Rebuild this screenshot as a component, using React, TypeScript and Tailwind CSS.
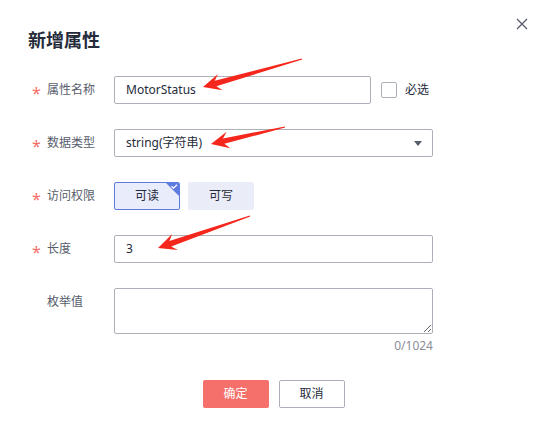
import React from "react";

function arrowPoints(tx: number, ty: number, px: number, py: number) {
  const dx = px - tx;
  const dy = py - ty;
  const L = Math.hypot(dx, dy);
  const ux = dx / L;
  const uy = dy / L;
  const nx = -uy;
  const ny = ux;
  const h = 17;
  const w = 8.5;
  const s = 2.8;
  const t = 0.6;
  const bx = px - ux * (h + 1);
  const by = py - uy * (h + 1);
  const kx = px - ux * (h - 4);
  const ky = py - uy * (h - 4);
  const pts: [number, number][] = [
    [tx + nx * t, ty + ny * t],
    [kx + nx * s, ky + ny * s],
    [bx + nx * w, by + ny * w],
    [px, py],
    [bx - nx * w, by - ny * w],
    [kx - nx * s, ky - ny * s],
    [tx - nx * t, ty - ny * t],
  ];
  return pts.map((p) => `${p[0].toFixed(1)},${p[1].toFixed(1)}`).join(" ");
}

function Label({ text, required = true }: { text: string; required?: boolean }) {
  return (
    <div className="w-[114px] shrink-0 pl-[32px] flex items-center h-[28px] text-[12px] text-[#575d6c]">
      <span className="w-[15px] inline-block text-[16px] leading-[14px] text-[#f66f6a] translate-y-[3px]">
        {required ? "*" : ""}
      </span>
      <span>{text}</span>
    </div>
  );
}

export default function App() {
  return (
    <div className="relative w-[547px] h-[439px] bg-white overflow-hidden font-['Noto_Sans','Noto_Sans_CJK_SC',sans-serif] text-[#252b3a]">
      <button className="absolute top-[18px] left-[516px] w-[12px] h-[12px]" aria-label="close">
        <svg width="12" height="12" viewBox="0 0 12 12">
          <path d="M1 1 L11 11 M11 1 L1 11" stroke="#575d6c" strokeWidth="1.3" fill="none" />
        </svg>
      </button>

      <h2 className="pt-[28px] pl-[28px] text-[18px] leading-[24px] font-bold text-[#252b3a]">新增属性</h2>

      <div className="mt-[24px] flex flex-col gap-[25px]">
        <div className="flex items-center h-[28px]">
          <Label text="属性名称" />
          <div className="w-[257px] h-[28px] border border-[#adb0b8] rounded-[2px] px-[11px] flex items-center text-[12px] text-[#252b3a]">
            MotorStatus
          </div>
          <div className="ml-[10px] w-[16px] h-[16px] border border-[#adb0b8] rounded-[2px] bg-white" />
          <span className="ml-[8px] text-[12px] text-[#252b3a]">必选</span>
        </div>

        <div className="flex items-center h-[28px]">
          <Label text="数据类型" />
          <div className="w-[319px] h-[28px] border border-[#adb0b8] rounded-[2px] pl-[11px] pr-[10px] flex items-center justify-between text-[12px] text-[#252b3a]">
            <span>string(字符串)</span>
            <svg width="8" height="5" viewBox="0 0 8 5">
              <path d="M0 0 H8 L4 5 Z" fill="#575d6c" />
            </svg>
          </div>
        </div>

        <div className="flex items-center h-[28px]">
          <Label text="访问权限" />
          <div className="flex gap-[8px]">
            <div className="relative w-[66px] h-[28px] border border-[#5e7ce0] bg-[#e8ecfb] rounded-[2px] flex items-center justify-center text-[12px] text-[#252b3a] overflow-hidden">
              可读
              <svg className="absolute top-0 right-0" width="13" height="13" viewBox="0 0 13 13">
                <path d="M0 0 H13 V13 Z" fill="#5e7ce0" />
                <path d="M5.5 3.2 L7.6 5.2 L11 1.8" stroke="#ffffff" strokeWidth="1.3" fill="none" />
              </svg>
            </div>
            <div className="w-[66px] h-[28px] bg-[#eaedf7] rounded-[2px] flex items-center justify-center text-[12px] text-[#252b3a]">
              可写
            </div>
          </div>
        </div>

        <div className="flex items-center h-[28px]">
          <Label text="长度" />
          <div className="w-[319px] h-[28px] border border-[#adb0b8] rounded-[2px] px-[11px] flex items-center text-[12px] text-[#252b3a]">
            3
          </div>
        </div>

        <div className="flex items-start">
          <Label text="枚举值" required={false} />
          <div className="flex flex-col">
            <textarea className="w-[319px] h-[46px] border border-[#adb0b8] rounded-[2px] outline-none" />
            <div className="mt-[4px] text-right text-[12px] leading-[16px] text-[#8a8e99]">0/1024</div>
          </div>
        </div>
      </div>

      <div className="mt-[26px] flex justify-center gap-[10px]">
        <button className="w-[66px] h-[28px] rounded-[2px] bg-[#f6706b] text-white text-[12px]">确定</button>
        <button className="w-[66px] h-[28px] rounded-[2px] border border-[#adb0b8] bg-white text-[#252b3a] text-[12px]">取消</button>
      </div>

      <svg className="absolute inset-0 pointer-events-none" width="547" height="439" viewBox="0 0 547 439">
        <polygon points={arrowPoints(302, 59, 203, 87)} fill="#f5261b" />
        <polygon points={arrowPoints(285, 127, 211, 144)} fill="#f5261b" />
        <polygon points={arrowPoints(250, 216, 158, 248)} fill="#f5261b" />
      </svg>
    </div>
  );
}
